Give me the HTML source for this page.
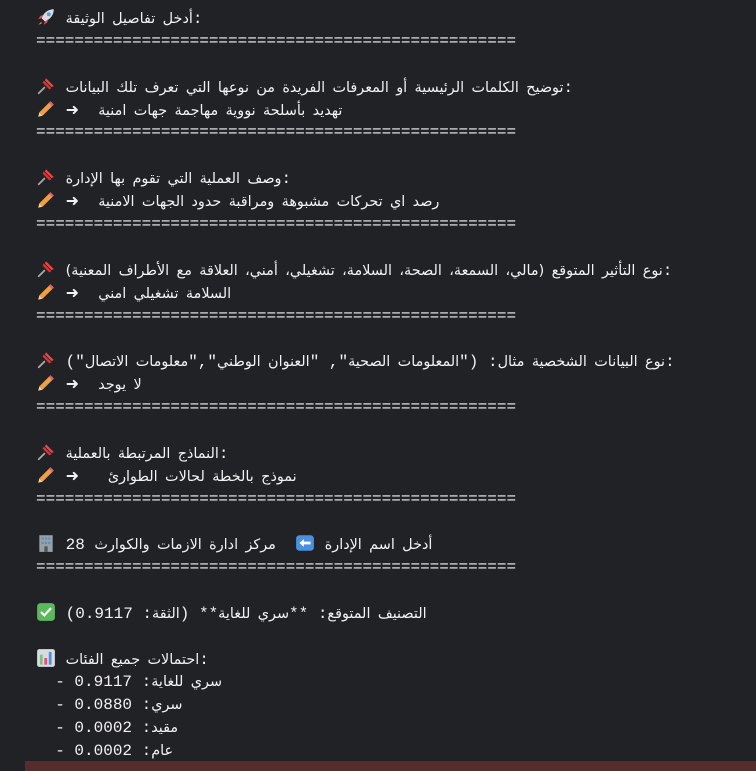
<!DOCTYPE html>
<html><head><meta charset="utf-8">
<style>
html,body{margin:0;padding:0;background:#212226;width:756px;height:771px;overflow:hidden}
.w{padding:7px 0 0 36px;font-family:"Liberation Mono","DejaVu Sans",monospace;font-size:16px;color:#f2f2f2;direction:ltr}
.w div{height:22.9px;line-height:22.9px;white-space:pre;overflow:visible}
.a{font-family:"DejaVu Sans",sans-serif;font-size:14.4px;line-height:1;word-spacing:2.8px}
.e{display:inline-block;width:20px;height:20px;vertical-align:-4px}
.bar{position:absolute;left:25px;top:761px;width:731px;height:10px;background:#562c2c}
</style></head><body>
<div class="w">
<div><svg class="e" viewBox="0 0 18 18"><path d="M16 2 C11 2 7 5 5 10 L8 13 C13 11 16 7 16 2Z" fill="#d9dde3"/><circle cx="11.5" cy="6.5" r="1.8" fill="#5aa0e0"/><path d="M5 10 L2 11 L4 8 L7 7Z M8 13 L7 16 L10 14 L11 11Z" fill="#e05060"/><path d="M5 13 L2 16 L5 15Z" fill="#f08040"/></svg> <span class="a">أدخل تفاصيل الوثيقة</span>:</div>
<div>==================================================</div>
<div> </div>
<div><svg class="e" viewBox="0 0 18 18"><path d="M7 4 L14 11 L12 12 L6 6Z" fill="#d33"/><path d="M9 2 L16 9 L14 10 L8 4Z" fill="#e44"/><path d="M8 10 L2 16" stroke="#aaa" stroke-width="1.6"/></svg> <span class="a">توضيح الكلمات الرئيسية أو المعرفات الفريدة من نوعها التي تعرف تلك البيانات</span>:</div>
<div><svg class="e" viewBox="0 0 18 18"><path d="M13 2 L16 5 L6 15 L3 12Z" fill="#f0a040"/><path d="M13 2 L16 5 L14.5 6.5 L11.5 3.5Z" fill="#e06070"/><path d="M3 12 L6 15 L2 16Z" fill="#f3d3a0"/></svg> ➜  <span class="a">تهديد بأسلحة نووية مهاجمة جهات امنية</span></div>
<div>==================================================</div>
<div> </div>
<div><svg class="e" viewBox="0 0 18 18"><path d="M7 4 L14 11 L12 12 L6 6Z" fill="#d33"/><path d="M9 2 L16 9 L14 10 L8 4Z" fill="#e44"/><path d="M8 10 L2 16" stroke="#aaa" stroke-width="1.6"/></svg> <span class="a">وصف العملية التي تقوم بها الإدارة</span>:</div>
<div><svg class="e" viewBox="0 0 18 18"><path d="M13 2 L16 5 L6 15 L3 12Z" fill="#f0a040"/><path d="M13 2 L16 5 L14.5 6.5 L11.5 3.5Z" fill="#e06070"/><path d="M3 12 L6 15 L2 16Z" fill="#f3d3a0"/></svg> ➜  <span class="a">رصد اي تحركات مشبوهة ومراقبة حدود الجهات الامنية</span></div>
<div>==================================================</div>
<div> </div>
<div><svg class="e" viewBox="0 0 18 18"><path d="M7 4 L14 11 L12 12 L6 6Z" fill="#d33"/><path d="M9 2 L16 9 L14 10 L8 4Z" fill="#e44"/><path d="M8 10 L2 16" stroke="#aaa" stroke-width="1.6"/></svg> <span class="a">نوع التأثير المتوقع (مالي، السمعة، الصحة، السلامة، تشغيلي، أمني، العلاقة مع الأطراف المعنية)</span>:</div>
<div><svg class="e" viewBox="0 0 18 18"><path d="M13 2 L16 5 L6 15 L3 12Z" fill="#f0a040"/><path d="M13 2 L16 5 L14.5 6.5 L11.5 3.5Z" fill="#e06070"/><path d="M3 12 L6 15 L2 16Z" fill="#f3d3a0"/></svg> ➜  <span class="a">السلامة تشغيلي امني</span></div>
<div>==================================================</div>
<div> </div>
<div><svg class="e" viewBox="0 0 18 18"><path d="M7 4 L14 11 L12 12 L6 6Z" fill="#d33"/><path d="M9 2 L16 9 L14 10 L8 4Z" fill="#e44"/><path d="M8 10 L2 16" stroke="#aaa" stroke-width="1.6"/></svg> <span class="a">نوع البيانات الشخصية مثال</span>: ("<span class="a">المعلومات الصحية</span>", "<span class="a">العنوان الوطني</span>","<span class="a">معلومات الاتصال</span>"):</div>
<div><svg class="e" viewBox="0 0 18 18"><path d="M13 2 L16 5 L6 15 L3 12Z" fill="#f0a040"/><path d="M13 2 L16 5 L14.5 6.5 L11.5 3.5Z" fill="#e06070"/><path d="M3 12 L6 15 L2 16Z" fill="#f3d3a0"/></svg> ➜  <span class="a">لا يوجد</span></div>
<div>==================================================</div>
<div> </div>
<div><svg class="e" viewBox="0 0 18 18"><path d="M7 4 L14 11 L12 12 L6 6Z" fill="#d33"/><path d="M9 2 L16 9 L14 10 L8 4Z" fill="#e44"/><path d="M8 10 L2 16" stroke="#aaa" stroke-width="1.6"/></svg> <span class="a">النماذج المرتبطة بالعملية</span>:</div>
<div><svg class="e" viewBox="0 0 18 18"><path d="M13 2 L16 5 L6 15 L3 12Z" fill="#f0a040"/><path d="M13 2 L16 5 L14.5 6.5 L11.5 3.5Z" fill="#e06070"/><path d="M3 12 L6 15 L2 16Z" fill="#f3d3a0"/></svg> ➜   <span class="a">نموذج بالخطة لحالات الطوارئ</span></div>
<div>==================================================</div>
<div> </div>
<div><svg class="e" viewBox="0 0 18 18"><rect x="3" y="2" width="12" height="15" fill="#9aa0a8"/><rect x="5" y="4" width="2" height="2" fill="#5a8fc0"/><rect x="8" y="4" width="2" height="2" fill="#5a8fc0"/><rect x="11" y="4" width="2" height="2" fill="#5a8fc0"/><rect x="5" y="8" width="2" height="2" fill="#5a8fc0"/><rect x="8" y="8" width="2" height="2" fill="#5a8fc0"/><rect x="11" y="8" width="2" height="2" fill="#5a8fc0"/><rect x="7.5" y="12" width="3" height="5" fill="#555"/></svg> <span class="a">أدخل اسم الإدارة</span> <svg class="e" viewBox="0 0 18 18"><rect x="1" y="2" width="16" height="14" rx="3" fill="#4a8fe0"/><path d="M4 9 L8 5.5 L8 7.8 L14 7.8 L14 10.2 L8 10.2 L8 12.5Z" fill="#fff"/></svg>  <span class="a">مركز ادارة الازمات والكوارث</span> 28</div>
<div>==================================================</div>
<div> </div>
<div><svg class="e" viewBox="0 0 18 18"><rect x="1" y="1" width="16" height="16" rx="3" fill="#5cb85c"/><path d="M4.5 9 L7.5 12 L13.5 5.5" stroke="#fff" stroke-width="2" fill="none"/></svg> <span class="a">التصنيف المتوقع</span>: **<span class="a">سري للغاية</span>** (<span class="a">الثقة</span>: 0.9117)</div>
<div> </div>
<div><svg class="e" viewBox="0 0 18 18"><rect x="1" y="1" width="16" height="16" rx="2" fill="#d8dce2"/><rect x="3.5" y="6" width="2.5" height="9" fill="#7bc47f"/><rect x="7.5" y="9" width="2.5" height="6" fill="#e0507a"/><rect x="11.5" y="3.5" width="2.5" height="11.5" fill="#4a8fe0"/></svg> <span class="a">احتمالات جميع الفئات</span>:</div>
<div>  - <span class="a">سري للغاية</span>: 0.9117</div>
<div>  - <span class="a">سري</span>: 0.0880</div>
<div>  - <span class="a">مقيد</span>: 0.0002</div>
<div>  - <span class="a">عام</span>: 0.0002</div>
</div>
<div class="bar"></div>
</body></html>
